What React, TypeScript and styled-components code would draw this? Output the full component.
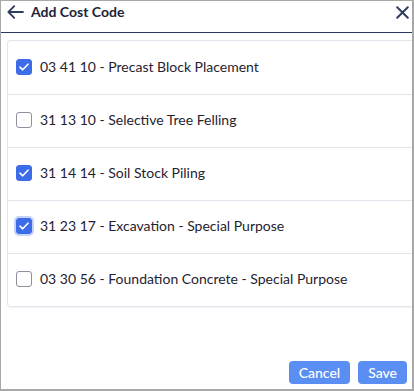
import React, { useState } from "react";
import styled, { createGlobalStyle, css } from "styled-components";

const GlobalStyle = createGlobalStyle`
  html, body {
    margin: 0;
    padding: 0;
    background: #ffffff;
    font-family: Lato, "Open Sans", sans-serif;
  }
  * {
    box-sizing: border-box;
  }
`;

const Frame = styled.div`
  width: 414px;
  height: 391px;
  display: flex;
  flex-direction: column;
  border-top: 1px solid #a8a8a8;
  border-left: 1px solid #a8a8a8;
  border-right: 2px solid #a8a8a8;
  border-bottom: 2px solid #a8a8a8;
  background: #ffffff;
`;

const Header = styled.div`
  height: 32px;
  display: flex;
  align-items: flex-start;
  padding: 2px 1px 0 5px;
  border-bottom: 1px solid #27395f;
`;

const IconButton = styled.button`
  background: none;
  border: none;
  padding: 0;
  width: 18px;
  height: 18px;
  display: flex;
  align-items: center;
  justify-content: center;
  color: #2f3e5c;
  cursor: pointer;
`;

const Title = styled.div`
  flex: 1;
  margin-left: 7px;
  font-size: 14px;
  font-weight: 700;
  line-height: 18px;
  color: #1c2336;
`;

const Body = styled.div`
  flex: 1;
  padding: 7px 0 0 6px;
`;

const Card = styled.ul`
  list-style: none;
  margin: 0;
  padding: 0;
  border: 1px solid #e3e5ee;
  border-right: none;
  border-radius: 4px 0 0 4px;
  box-shadow: 0 1px 1px rgba(40, 50, 90, 0.06);
`;

const Row = styled.li`
  height: 53px;
  display: flex;
  align-items: center;
  padding: 0 0 2px 8px;
  gap: 8px;
  font-size: 14px;
  line-height: 18px;
  color: #1f2330;
  cursor: pointer;

  & + & {
    border-top: 1px solid #e3e5ee;
  }
`;

const Box = styled.span<{ checked: boolean; focused?: boolean }>`
  width: 16px;
  height: 16px;
  border-radius: 3px;
  display: flex;
  align-items: center;
  justify-content: center;
  border: 1px solid #8b909c;
  background: #ffffff;
  flex-shrink: 0;

  ${(p) =>
    p.checked &&
    css`
      background: #3d6ce8;
      border-color: #3d6ce8;
    `}

  ${(p) =>
    p.focused &&
    css`
      box-shadow: 0 0 0 2px #c3d3fb;
    `}
`;

const Footer = styled.div`
  height: 40px;
  display: flex;
  justify-content: flex-end;
  align-items: flex-start;
  gap: 8px;
  padding: 12px 5px 0 0;
`;

const Button = styled.button`
  height: 23px;
  padding: 0 10px;
  border: none;
  border-radius: 4px;
  background: #5b8ef2;
  color: #ffffff;
  font-family: Lato, sans-serif;
  font-size: 14px;
  font-weight: 500;
  cursor: pointer;
`;

const items = [
  { code: "03 41 10", name: "Precast Block Placement", checked: true },
  { code: "31 13 10", name: "Selective Tree Felling", checked: false },
  { code: "31 14 14", name: "Soil Stock Piling", checked: true },
  { code: "31 23 17", name: "Excavation - Special Purpose", checked: true },
  { code: "03 30 56", name: "Foundation Concrete - Special Purpose", checked: false },
];

const App = () => {
  const [checked, setChecked] = useState(items.map((i) => i.checked));

  const toggle = (idx: number) =>
    setChecked((prev) => prev.map((v, i) => (i === idx ? !v : v)));

  return (
    <>
      <GlobalStyle />
      <Frame>
        <Header>
          <IconButton title="Back">
            <svg width="17" height="14" viewBox="0 0 17 14" fill="none">
              <path
                d="M16 7H1.8M7.2 1.2 1.4 7l5.8 5.8"
                stroke="currentColor"
                strokeWidth="1.8"
                strokeLinecap="round"
                strokeLinejoin="round"
              />
            </svg>
          </IconButton>
          <Title>Add Cost Code</Title>
          <IconButton title="Close">
            <svg width="13" height="13" viewBox="0 0 13 13" fill="none">
              <path
                d="M1.2 1.2l10.6 10.6M11.8 1.2 1.2 11.8"
                stroke="currentColor"
                strokeWidth="2"
                strokeLinecap="round"
              />
            </svg>
          </IconButton>
        </Header>
        <Body>
          <Card>
            {items.map((item, idx) => (
              <Row key={item.code} onClick={() => toggle(idx)}>
                <Box checked={checked[idx]} focused={idx === 3}>
                  {checked[idx] && (
                    <svg width="10" height="8" viewBox="0 0 10 8" fill="none">
                      <path
                        d="M1 4.2 3.7 6.8 9 1.2"
                        stroke="#ffffff"
                        strokeWidth="1.6"
                        strokeLinecap="round"
                        strokeLinejoin="round"
                      />
                    </svg>
                  )}
                </Box>
                <span>
                  {item.code} - {item.name}
                </span>
              </Row>
            ))}
          </Card>
        </Body>
        <Footer>
          <Button>Cancel</Button>
          <Button>Save</Button>
        </Footer>
      </Frame>
    </>
  );
};

export default App;
